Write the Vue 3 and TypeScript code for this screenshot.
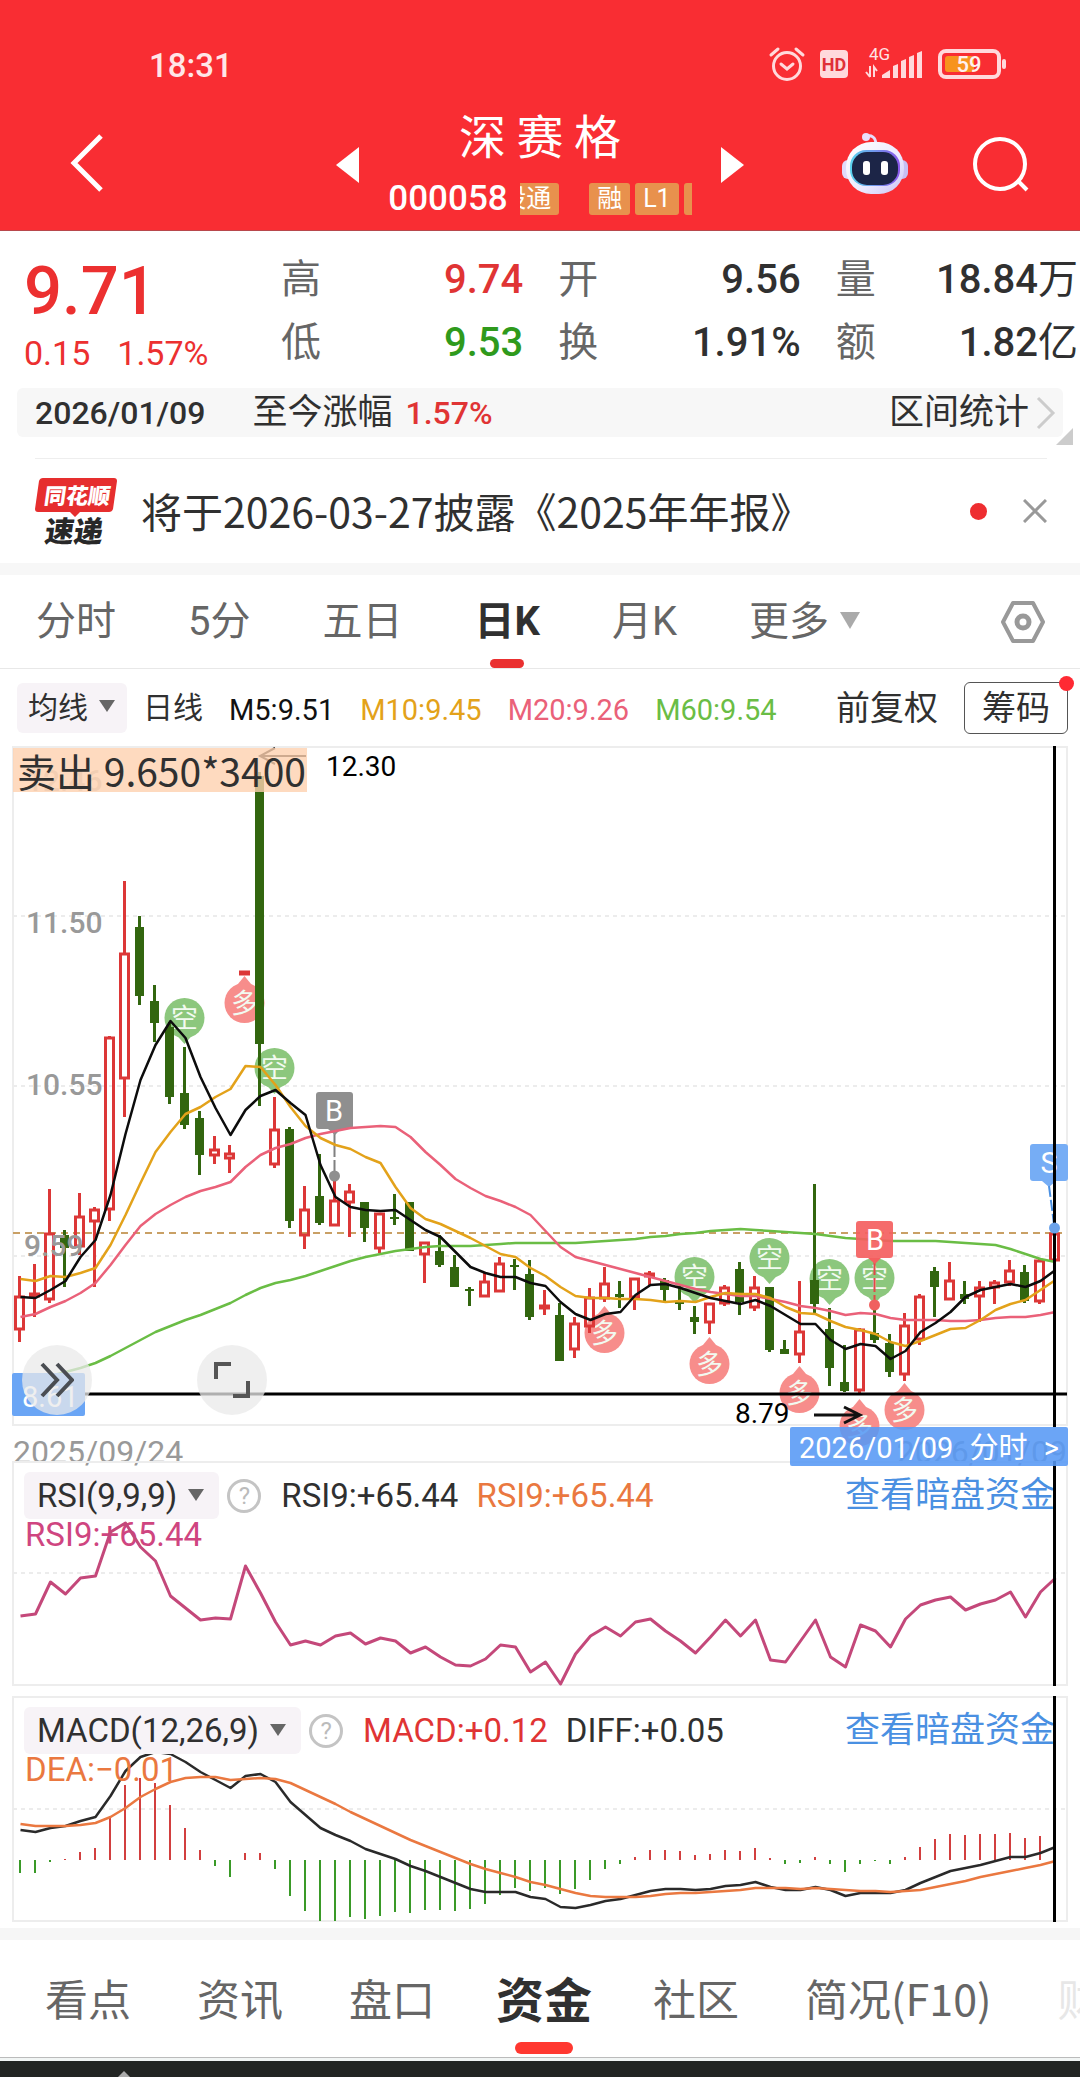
<script setup lang="ts">
type Candle = [high: number, top: number, bottom: number, low: number, up: 0 | 1]

const xOf = (i: number): number => 19.5 + i * 15

const candles: Candle[] = [
  [530, 550, 584, 596, 1], [518, 547, 551, 571, 1], [443, 487, 554, 557, 1], [484, 489, 502, 541, 0], [447, 470, 501, 509, 1],
  [461, 463, 476, 541, 1], [290, 291, 464, 475, 1], [135, 207, 333, 371, 1], [170, 181, 250, 259, 0], [239, 255, 277, 296, 0],
  [276, 281, 351, 358, 0], [301, 347, 379, 383, 0], [365, 372, 409, 429, 0], [390, 403, 410, 418, 1], [399, 407, 413, 427, 1],
  [225, 225, 229, 229, 1], [26, 30, 298, 360, 0], [351, 383, 419, 422, 1], [381, 383, 475, 482, 0], [440, 463, 490, 503, 1],
  [408, 450, 477, 479, 0], [431, 454, 480, 480, 1], [438, 445, 457, 491, 1], [456, 456, 482, 496, 0], [467, 467, 503, 507, 1],
  [448, 471, 473, 479, 0], [456, 456, 505, 505, 0], [496, 496, 509, 537, 1], [489, 505, 519, 521, 0], [509, 521, 541, 541, 0],
  [541, 543, 545, 560, 0], [527, 535, 551, 551, 1], [511, 517, 546, 546, 1], [513, 519, 521, 544, 0], [514, 528, 571, 574, 0],
  [544, 559, 563, 569, 1], [557, 569, 615, 615, 0], [571, 577, 604, 612, 1], [542, 551, 581, 587, 1], [521, 537, 553, 556, 1],
  [535, 548, 551, 562, 0], [532, 532, 552, 564, 1], [525, 527, 531, 539, 1], [532, 534, 544, 556, 0], [540, 556, 558, 564, 0],
  [560, 571, 576, 588, 0], [557, 557, 577, 588, 1], [539, 541, 558, 560, 1], [516, 523, 556, 569, 0], [530, 541, 562, 565, 1],
  [541, 541, 604, 606, 0], [594, 603, 608, 608, 0], [535, 585, 609, 617, 1], [438, 534, 558, 567, 0], [562, 583, 622, 640, 0],
  [599, 636, 645, 646, 0], [582, 583, 645, 649, 1], [560, 587, 594, 597, 0], [588, 597, 626, 631, 0], [567, 579, 629, 635, 1],
  [548, 550, 594, 599, 1], [521, 525, 541, 571, 0], [516, 534, 554, 554, 1], [535, 548, 553, 558, 0], [535, 541, 551, 576, 1],
  [534, 536, 542, 558, 1], [514, 524, 537, 540, 1], [519, 526, 555, 557, 0], [513, 514, 556, 558, 1], [486, 487, 515, 515, 1],
]

const averages: { color: string; values: number[] }[] = [
  { color: '#6abd45', values: [637, 633, 630, 626, 622, 617, 610, 602, 594, 586, 580, 574, 569, 563, 557, 549, 542, 537, 534, 530, 525, 520, 515, 511, 508, 505, 503, 501, 500, 500, 500, 499, 498, 497, 497, 497, 497, 497, 496, 495, 494, 493, 491, 490, 488, 487, 485, 484, 483, 484, 485, 486, 487, 488, 490, 492, 493, 494, 495, 495, 495, 495, 496, 497, 498, 499, 503, 508, 513, 516] },
  { color: '#ea6179', values: [571, 568, 561, 555, 547, 537, 519, 499, 480, 468, 459, 451, 445, 441, 436, 421, 409, 402, 398, 392, 388, 385, 382, 381, 380, 381, 391, 406, 419, 433, 442, 450, 455, 461, 469, 485, 501, 511, 515, 519, 523, 527, 531, 535, 539, 543, 546, 548, 550, 550, 553, 556, 560, 562, 565, 569, 567, 568, 572, 574, 574, 574, 575, 575, 574, 572, 571, 571, 569, 566] },
  { color: '#e3a21a', values: [533, 535, 530, 531, 527, 522, 499, 469, 437, 406, 386, 368, 361, 351, 343, 320, 321, 339, 361, 380, 392, 399, 403, 411, 417, 441, 462, 473, 478, 485, 492, 500, 508, 511, 522, 530, 541, 550, 552, 552, 553, 553, 554, 556, 555, 556, 551, 547, 548, 548, 552, 561, 567, 568, 575, 581, 584, 588, 596, 600, 595, 589, 583, 582, 574, 564, 558, 554, 544, 534] },
  { color: '#0c0c0c', values: [551, 552, 544, 535, 511, 494, 449, 388, 334, 299, 275, 292, 331, 362, 389, 364, 350, 344, 357, 369, 419, 451, 461, 464, 465, 464, 474, 484, 491, 506, 521, 527, 531, 531, 537, 540, 556, 568, 574, 568, 566, 549, 539, 538, 542, 547, 552, 555, 558, 554, 560, 569, 578, 578, 594, 603, 598, 600, 613, 605, 586, 577, 566, 551, 544, 541, 538, 541, 535, 524] },
]

const rsi = [155, 153, 121, 133, 117, 115, 71, 62, 86, 100, 135, 147, 159, 157, 158, 105, 132, 161, 184, 180, 184, 175, 172, 183, 177, 180, 192, 186, 196, 204, 205, 198, 184, 186, 211, 201, 223, 193, 175, 166, 175, 161, 158, 170, 180, 192, 176, 159, 175, 159, 199, 201, 180, 159, 196, 206, 164, 170, 186, 158, 144, 139, 136, 149, 143, 139, 131, 156, 131, 117]

const diff = [134, 136, 132, 130, 125, 121, 100, 75, 61, 56, 58, 66, 76, 84, 92, 80, 78, 86, 106, 119, 132, 139, 145, 153, 158, 163, 170, 175, 181, 187, 193, 196, 196, 196, 201, 203, 211, 212, 209, 205, 203, 199, 195, 193, 193, 194, 193, 190, 189, 186, 191, 194, 194, 191, 194, 200, 197, 197, 197, 194, 187, 181, 175, 172, 169, 165, 161, 161, 157, 151]

const dea = [128, 130, 130, 130, 129, 127, 121, 112, 101, 93, 86, 82, 81, 81, 84, 83, 82, 83, 87, 94, 101, 108, 116, 123, 130, 137, 144, 150, 156, 162, 168, 173, 177, 181, 186, 189, 193, 197, 200, 201, 201, 201, 200, 198, 197, 197, 196, 195, 194, 192, 192, 192, 193, 192, 193, 194, 195, 195, 196, 195, 194, 191, 188, 185, 181, 178, 175, 172, 169, 165]

// Positive bars hang below the zero line.
const histogram = [13, 13, 2, -1, -8, -12, -43, -75, -82, -77, -55, -32, -10, 6, 17, -7, -7, 9, 36, 51, 61, 61, 57, 59, 56, 52, 53, 50, 50, 51, 49, 44, 35, 28, 31, 28, 34, 29, 20, 9, 4, -3, -10, -10, -9, -5, -6, -10, -9, -12, -2, 4, 3, -3, 4, 12, 4, 1, 4, -3, -13, -21, -26, -25, -26, -26, -27, -22, -24, -29]

const shortSignals: [number, number][] = [[11, 272], [17, 322], [45, 531], [50, 512], [54, 533], [57, 532]]
const longSignals: [number, number][] = [[15, 257], [39, 587], [46, 618], [52, 647], [56, 680], [59, 664]]

const points = (values: number[]): string => values.map((y, i) => `${xOf(i) + 1},${y}`).join(' ')

const quotes = [
  { label: '高', value: '9.74', tone: 'up' },
  { label: '开', value: '9.56', tone: '' },
  { label: '量', value: '18.84', unit: '万', tone: '' },
  { label: '低', value: '9.53', tone: 'down' },
  { label: '换', value: '1.91%', tone: '' },
  { label: '额', value: '1.82', unit: '亿', tone: '' },
]
const periods = ['分时', '5分', '五日', '日K', '月K']
const sections = ['看点', '资讯', '盘口', '资金', '社区', '简况(F10)', '财务']
</script>

<template>
  <div class="app">
    <header class="top">
      <div class="status">
        <span class="clock">18:31</span>
        <svg class="status-icons" width="250" height="44" viewBox="762 43 250 44" aria-hidden="true">
          <g fill="none" stroke="#ffd9dc" stroke-width="3" stroke-linecap="round">
            <circle cx="787" cy="66" r="13.5" />
            <path d="M781 64l6 5 6-5M771 55l7-6M803 55l-7-6" />
          </g>
          <rect x="820" y="50" width="28" height="28" rx="4" fill="#ffd9dc" />
          <text x="834" y="71" text-anchor="middle" font-size="18" font-weight="700" fill="#e03038">HD</text>
          <text x="869" y="60" font-size="17" fill="#ffe3e5">4G</text>
          <g fill="#ffd9dc">
            <path d="M882 78v-3l8-5v8zM893 78V66l5-2v14zM901 78V61l5-2v19zM909 78V57l5-2v23zM917 78V53l5-2v27z" />
          </g>
          <path d="M870 66v11M870 77l-4-5M874 77V67l3 4" fill="none" stroke="#ffd9dc" stroke-width="2" />
          <rect x="940" y="51" width="59" height="26" rx="6" fill="none" stroke="#ffd9dc" stroke-width="4" />
          <rect x="1002" y="59" width="4" height="10" rx="2" fill="#ffd9dc" />
          <rect x="945" y="56" width="29" height="16" rx="3" fill="#f7931e" />
          <text x="969" y="72" text-anchor="middle" font-size="22" font-weight="500" fill="#fff0f0">59</text>
        </svg>
      </div>
      <div class="nav">
        <button class="icon-btn back" aria-label="返回">
          <svg width="34" height="60" viewBox="0 0 34 60"><path d="M31 3L4 30l27 27" fill="none" stroke="#fff" stroke-width="5" /></svg>
        </button>
        <div class="stock">
          <button class="icon-btn" aria-label="上一只">
            <svg width="23" height="36" viewBox="0 0 23 36"><path d="M23 0v36L0 18z" fill="#fff" /></svg>
          </button>
          <div class="stock-name">
            <h1>深 赛 格</h1>
            <div class="code">
              <span>000058</span>
              <div class="tags">
                <div class="tag-clip"><span class="tag">深股通</span></div>
                <span class="tag spaced">融</span>
                <span class="tag">L1</span>
                <span class="tag cut"></span>
              </div>
            </div>
          </div>
          <button class="icon-btn" aria-label="下一只">
            <svg width="23" height="36" viewBox="0 0 23 36"><path d="M0 0v36l23-18z" fill="#fff" /></svg>
          </button>
        </div>
        <div class="tools">
          <button class="icon-btn" aria-label="智能助手">
            <svg width="66" height="62" viewBox="0 0 66 62">
              <defs>
                <linearGradient id="shell" x1="0" y1="0" x2="1" y2="1">
                  <stop offset="0" stop-color="#ffffff" />
                  <stop offset="0.6" stop-color="#ece9ff" />
                  <stop offset="1" stop-color="#c9c3f5" />
                </linearGradient>
                <linearGradient id="rim" x1="0" y1="0" x2="1" y2="0">
                  <stop offset="0" stop-color="#59d3ee" />
                  <stop offset="1" stop-color="#8a56ea" />
                </linearGradient>
              </defs>
              <path d="M23 5c6-3 11 0 11 8" fill="none" stroke="#e6dcfb" stroke-width="3" />
              <circle cx="24" cy="5" r="4" fill="#eadffc" />
              <rect x="0" y="28" width="12" height="19" rx="6" fill="#e0dafc" />
              <rect x="54" y="28" width="12" height="19" rx="6" fill="#c7bff3" />
              <rect x="4" y="10" width="58" height="52" rx="25" fill="url(#shell)" />
              <rect x="8" y="18" width="50" height="36" rx="16" fill="url(#rim)" />
              <rect x="10" y="20" width="46" height="33" rx="15" fill="#1c2547" />
              <rect x="21" y="29" width="7" height="14" rx="3" fill="#fff" />
              <rect x="39" y="29" width="7" height="14" rx="3" fill="#fff" />
            </svg>
          </button>
          <button class="icon-btn" aria-label="搜索">
            <svg width="56" height="56" viewBox="0 0 56 56"><circle cx="27" cy="27" r="25" fill="none" stroke="#fff" stroke-width="4" /><path d="M44 43l10 10" stroke="#fff" stroke-width="4" /></svg>
          </button>
        </div>
      </div>
    </header>

    <section class="quote">
      <div class="price">
        <strong>9.71</strong>
        <div class="change"><span>0.15</span><span>1.57%</span></div>
      </div>
      <dl class="figures">
        <div v-for="q in quotes" :key="q.label" class="figure">
          <dt>{{ q.label }}</dt>
          <dd :class="q.tone">{{ q.value }}<span v-if="q.unit">{{ q.unit }}</span></dd>
        </div>
      </dl>
    </section>

    <div class="range">
      <span class="num">2026/01/09</span>
      <span class="since">至今涨幅</span>
      <span class="num up">1.57%</span>
      <a href="#" class="stat">区间统计
        <svg width="20" height="34" viewBox="0 0 20 34"><path d="M2 2l15 15L2 32" fill="none" stroke="#ccc" stroke-width="3" /></svg>
      </a>
      <i class="corner"></i>
    </div>

    <div class="notice">
      <svg class="logo" width="82" height="68" viewBox="0 0 82 68" role="img" aria-label="同花顺速递">
        <path d="M8 1h71q3 0 3 3l-4 28q-1 3-4 3H45l-5 5-5-5H3q-3 0-3-3L4 4q1-3 4-3z" fill="#e62e2e" />
        <g transform="skewX(-8)" font-weight="900">
          <text x="12" y="27" font-size="22" fill="#fff">同花顺</text>
          <text x="18" y="65" font-size="29" fill="#282828">速递</text>
        </g>
      </svg>
      <a href="#" class="notice-text">将于2026-03-27披露《2025年年报》</a>
      <i class="dot"></i>
      <button class="icon-btn" aria-label="关闭">
        <svg width="24" height="24" viewBox="0 0 24 24"><path d="M1 1l22 22M23 1L1 23" stroke="#999" stroke-width="3" /></svg>
      </button>
    </div>

    <nav class="periods">
      <button v-for="p in periods" :key="p" :class="{ active: p === '日K' }">{{ p }}</button>
      <button class="more">更多<i class="caret light"></i></button>
      <button class="icon-btn gear" aria-label="设置">
        <svg width="44" height="44" viewBox="0 0 44 44" fill="none" stroke="#999" stroke-width="4"><path d="M12 3h20l10 19-10 19H12L2 22z" stroke-linejoin="round" /><circle cx="22" cy="22" r="6" stroke-width="5" /></svg>
      </button>
    </nav>

    <div class="ma-row">
      <button class="pill">均线<i class="caret"></i></button>
      <span class="daily">日线</span>
      <div class="ma-values">
        <span class="m5">M5:9.51</span><span class="m10">M10:9.45</span><span class="m20">M20:9.26</span><span class="m60">M60:9.54</span>
      </div>
      <span class="adjust">前复权</span>
      <button class="chips">筹码<i class="dot"></i></button>
    </div>

    <section class="panel main-chart">
      <svg viewBox="0 0 1080 681" class="plot">
        <rect x="13" y="1" width="1054" height="678" class="frame" />
        <path d="M13 170H1067M13 340H1067M13 510H1067" class="grid" />
        <path d="M13 487H1062" stroke="#c9a065" stroke-width="2" stroke-dasharray="7 5" />
        <g v-for="[i, y] in shortSignals" :key="'s' + i">
          <path :d="`M${xOf(i) - 9} ${y + 16}l9 10 9-10z`" fill="#8cc77d" />
          <circle :cx="xOf(i)" :cy="y" r="20" fill="#8cc77d" />
          <text :x="xOf(i)" :y="y + 10" class="signal">空</text>
        </g>
        <g v-for="[i, y] in longSignals" :key="'l' + i">
          <path :d="`M${xOf(i) - 9} ${y - 16}l9 -11 9 11z`" fill="#f78d8b" />
          <circle :cx="xOf(i)" :cy="y" r="20" fill="#f78d8b" />
          <text :x="xOf(i)" :y="y + 10" class="signal">多</text>
        </g>
        <template v-for="(c, i) in candles" :key="i">
          <g v-if="c[4]" stroke="#dc3737" stroke-width="3" fill="none">
            <path :d="`M${xOf(i)} ${c[0]}V${c[1]}M${xOf(i)} ${c[2]}V${c[3]}`" />
            <rect :x="xOf(i) - 4" :y="c[1] + 1" width="8" :height="Math.max(c[2] - c[1] - 2, 1)" />
          </g>
          <g v-else fill="#32660f">
            <rect :x="xOf(i) - 1.5" :y="c[0]" width="3" :height="c[3] - c[0]" />
            <rect :x="xOf(i) - 4.5" :y="c[1]" width="9" :height="c[2] - c[1]" />
          </g>
        </template>
        <g class="axis">
          <text x="26" y="45" opacity="0.6">12.46</text>
          <text x="26" y="187">11.50</text>
          <text x="26" y="349">10.55</text>
          <text x="24" y="510">9.59</text>
        </g>
        <g stroke-width="2">
          <path d="M334.5 386V428" stroke="#808080" stroke-dasharray="25 3" />
          <rect x="316" y="346" width="37" height="37" rx="3" fill="#8f8f8f" />
          <path d="M328 383h13l-6 6z" fill="#8f8f8f" />
          <circle cx="334.5" cy="430" r="5.5" fill="#8f8f8f" />
          <path d="M874.5 515V557" stroke="#e04848" stroke-dasharray="14 3" />
          <circle cx="874.5" cy="559" r="5.5" fill="#f0605f" />
        </g>
        <polyline v-for="a in averages" :key="a.color" :points="points(a.values)" :stroke="a.color" class="curve" />
        <g>
          <rect x="856" y="475" width="37" height="37" rx="3" fill="#f45f5f" fill-opacity="0.92" />
          <path d="M868 512h13l-6 6z" fill="#f45f5f" />
          <rect x="1030" y="398" width="38" height="37" rx="3" fill="#76adf5" />
          <path d="M1042 435h14l-7 6z" fill="#76adf5" />
          <path d="M1049 440l5 38" stroke="#4a90e2" stroke-width="2" stroke-dasharray="11 3" />
          <text x="334" y="375" class="badge">B</text>
          <text x="875" y="504" class="badge">B</text>
          <text x="1049" y="427" class="badge">S</text>
        </g>
        <g stroke="#111" stroke-width="2" fill="none">
          <path d="M306 10H260M275 2l-15 8 15 8" />
          <path d="M814 669H860M844 661l16 8-16 8" stroke-width="3" />
        </g>
        <text x="326" y="30" class="extreme">12.30</text>
        <text x="735" y="677" class="extreme">8.79</text>
        <path d="M13 648H1067M1054.5 0V681" stroke="#000" stroke-width="3" />
        <circle cx="1054.5" cy="482" r="5.5" fill="#6ba2ea" />
        <rect x="12" y="627" width="73" height="43" rx="2" fill="#6aa5f5" />
        <text x="22" y="661" class="low">8.61</text>
      </svg>
      <div class="trade">卖出 9.650*3400</div>
      <button class="round forward" aria-label="展开">
        <svg width="34" height="36" viewBox="0 0 34 36"><path d="M2 2l15 16L2 34M17 2l15 16-15 16" fill="none" stroke="#4a4d52" stroke-width="4" /></svg>
      </button>
      <button class="round expand" aria-label="全屏">
        <svg width="36" height="36" viewBox="0 0 36 36"><path d="M2 17V2h15M34 19v15H19" fill="none" stroke="#555" stroke-width="4" /></svg>
      </button>
    </section>

    <div class="dates">
      <span>2025/09/24</span>
      <span class="last-date">2026/01/09</span>
      <button class="cursor-date"><span>2026/01/09</span><span>分时</span><span>&gt;</span></button>
    </div>

    <section class="panel rsi">
      <svg viewBox="0 0 1080 225" class="plot">
        <rect x="13" y="1" width="1054" height="223" class="frame" />
        <path d="M13 112H1067" class="grid" />
      </svg>
      <div class="legend">
        <button class="pill">RSI(9,9,9)<i class="caret"></i></button>
        <button class="help" aria-label="说明">?</button>
        <span>RSI9:+65.44</span>
        <span class="orange">RSI9:+65.44</span>
        <a href="#">查看暗盘资金</a>
      </div>
      <div class="second magenta">RSI9:+65.44</div>
      <svg viewBox="0 0 1080 225" class="plot">
        <polyline :points="points(rsi)" stroke="#c4487a" class="curve thick" />
        <path d="M1054.5 0V225" stroke="#000" stroke-width="3" />
      </svg>
    </section>

    <section class="panel macd">
      <svg viewBox="0 0 1080 226" class="plot">
        <rect x="13" y="1" width="1054" height="224" class="frame" />
        <path d="M13 113H1067" class="grid" />
        <rect v-for="(h, i) in histogram" :key="i" :x="xOf(i) - 0.5" :y="h < 0 ? 164 + h : 164" width="2" :height="Math.abs(h)" :fill="h < 0 ? '#d23f3f' : '#3a9a28'" />
        <polyline :points="points(diff)" stroke="#2a2a2a" class="curve" />
      </svg>
      <div class="legend">
        <button class="pill">MACD(12,26,9)<i class="caret"></i></button>
        <button class="help" aria-label="说明">?</button>
        <span class="up">MACD:+0.12</span>
        <span>DIFF:+0.05</span>
        <a href="#">查看暗盘资金</a>
      </div>
      <div class="second orange">DEA:−0.01</div>
      <svg viewBox="0 0 1080 226" class="plot">
        <polyline :points="points(dea)" stroke="#ea7840" class="curve" />
        <path d="M1054.5 0V226" stroke="#000" stroke-width="3" />
      </svg>
    </section>

    <nav class="sections">
      <button v-for="s in sections" :key="s" :class="{ active: s === '资金', faded: s === '财务' }">{{ s }}</button>
    </nav>
    <footer class="dock">
      <svg width="12" height="6" viewBox="0 0 12 6"><path d="M6 0l6 6H0z" fill="#aaa" /></svg>
    </footer>
  </div>
</template>

<style>
body {
  margin: 0;
  background: #fff;
}
</style>

<style scoped>
.app {
  font-family: Roboto, "Noto Sans CJK SC", sans-serif;
  color: #303030;
  overflow: hidden;
  background: #fff;
}
* {
  box-sizing: border-box;
}
button {
  font: inherit;
  color: inherit;
  border: 0;
  padding: 0;
  background: none;
  white-space: nowrap;
}
a {
  color: inherit;
  text-decoration: none;
}
svg {
  display: block;
}
.up { color: #e03434; }
.down { color: #2f9a1c; }
.orange { color: #ea7840; }
.magenta { color: #cf4580; }

.top {
  background: #f92d33;
  color: #fff;
  height: 231px;
  border-bottom: 1px solid #b8484c;
}
.status {
  display: flex;
  justify-content: space-between;
  align-items: center;
  height: 100px;
  padding: 30px 68px 0 149px;
}
.clock {
  font-size: 33px;
  font-weight: 500;
  color: #ffe6e8;
}
.nav {
  display: grid;
  grid-template-columns: 1fr auto 1fr;
  height: 130px;
}
.icon-btn {
  display: flex;
}
.back {
  margin: 33px 0 0 70px;
  align-self: start;
}
.stock {
  display: flex;
  justify-content: space-between;
  width: 408px;
}
.stock > .icon-btn {
  margin-top: 47px;
  align-self: start;
}
.stock-name {
  display: flex;
  flex-direction: column;
  align-items: center;
}
h1 {
  margin: 4px 0 0;
  font-family: "Noto Sans CJK SC", sans-serif;
  font-size: 47px;
  font-weight: 400;
  line-height: 60px;
}
.code {
  display: flex;
  align-items: center;
  gap: 12px;
  margin-top: 18px;
  font-size: 35px;
  font-weight: 500;
  line-height: 34px;
}
.tags {
  display: flex;
  gap: 5px;
  width: 172px;
}
.tag-clip {
  display: flex;
  justify-content: flex-end;
  width: 42px;
  overflow: hidden;
}
.tag {
  flex: none;
  height: 32px;
  padding: 0 8px;
  border-radius: 3px;
  background: #e8914d;
  font-size: 25px;
  font-weight: 400;
  line-height: 32px;
}
.spaced {
  margin-left: 25px;
}
.cut {
  width: 8px;
  padding: 0;
  border-radius: 3px 0 0 3px;
}
.tools {
  display: flex;
  justify-content: flex-end;
  align-items: flex-start;
  gap: 65px;
  padding: 32px 51px 0 0;
}
.tools .icon-btn:last-child {
  margin-top: 5px;
}

.quote {
  display: flex;
  height: 157px;
  padding: 17px 2px 0 24px;
}
.price {
  flex: none;
  width: 257px;
  color: #ec3030;
}
.price strong {
  display: block;
  margin-top: 7px;
  font-size: 67px;
  font-weight: 500;
  line-height: 72px;
}
.change {
  display: flex;
  gap: 27px;
  margin-top: 6px;
  font-size: 34px;
  line-height: 40px;
}
.figures {
  flex: 1;
  display: grid;
  grid-template-columns: repeat(3, 1fr);
  grid-auto-rows: 63px;
  column-gap: 35px;
  margin: 0;
}
.figure {
  display: flex;
  justify-content: space-between;
  align-items: center;
  font-size: 40px;
  line-height: 48px;
}
dt {
  color: #666;
}
dd {
  margin: 0;
  font-weight: 500;
  white-space: nowrap;
}
dd span {
  font-weight: 400;
}

.range {
  position: relative;
  display: flex;
  align-items: center;
  height: 49px;
  margin: 0 17px;
  padding: 0 7px 0 18px;
  border-radius: 6px;
  background: #f7f7f7;
  font-size: 35px;
  line-height: 48px;
}
.range .num {
  font-size: 32px;
  font-weight: 500;
}
.since {
  margin: 0 13px 0 47px;
}
.stat {
  display: flex;
  align-items: center;
  gap: 7px;
  margin-left: auto;
}
.corner {
  position: absolute;
  right: -10px;
  bottom: -8px;
  border-bottom: 17px solid #ccc;
  border-left: 17px solid transparent;
}

.notice {
  display: flex;
  align-items: center;
  height: 105px;
  margin: 21px 33px 0 35px;
  border-top: 1px solid #eee;
}
.logo text {
  font-family: "Noto Sans CJK SC", sans-serif;
}
.notice-text {
  margin-left: 24px;
  padding-bottom: 3px;
  font-family: "Noto Sans CJK SC", sans-serif;
  font-size: 41px;
}
.dot {
  border-radius: 50%;
  background: #ee2d30;
}
.notice .dot {
  width: 17px;
  height: 17px;
  margin: 0 36px 0 auto;
}

.periods {
  display: flex;
  align-items: center;
  gap: 72px;
  height: 106px;
  padding: 0 35px 0 36px;
  border-top: 12px solid #f7f7f7;
  border-bottom: 1px solid #e8e8e8;
  color: #666;
  font-size: 40px;
  line-height: 48px;
}
.periods button {
  position: relative;
}
.active {
  color: #303030;
  font-weight: 700;
}
.active::after {
  content: "";
  position: absolute;
  left: 50%;
  border-radius: 6px;
}
.periods .active::after {
  width: 34px;
  height: 9px;
  bottom: -22px;
  margin-left: -17px;
  background: #ea3030;
}
.caret {
  display: inline-block;
  margin-left: 11px;
  border: 8px solid transparent;
  border-top: 12px solid #666;
  border-bottom: 0;
  vertical-align: 6px;
}
.light {
  border-width: 17px 10px 0;
  border-top-color: #aaa;
}
.gear {
  margin-left: auto;
}

.ma-row {
  display: flex;
  align-items: center;
  height: 77px;
  padding: 0 12px 0 17px;
  font-size: 30px;
  line-height: 40px;
}
.pill {
  height: 50px;
  padding: 0 12px 0 11px;
  border-radius: 6px;
  background: #f7f3f7;
}
.daily {
  margin-left: 16px;
}
.ma-values {
  display: flex;
  gap: 26px;
  margin-left: 26px;
  padding-top: 4px;
  font-size: 29px;
}
.m5 { color: #111; }
.m10 { color: #e3a21a; }
.m20 { color: #ea6179; }
.m60 { color: #6abd45; }
.adjust {
  margin-left: auto;
  font-size: 34px;
}
.chips {
  position: relative;
  width: 104px;
  height: 52px;
  margin-left: 26px;
  border: 1px solid #555;
  border-radius: 6px;
  font-size: 34px;
}
.chips .dot {
  position: absolute;
  top: -7px;
  right: -7px;
  width: 15px;
  height: 15px;
  background: #ff2a33;
}

.panel {
  position: relative;
}
.plot {
  width: 100%;
  overflow: visible;
}
.frame {
  fill: none;
  stroke: #ededed;
  stroke-width: 2;
}
.grid {
  stroke: #ececec;
  stroke-width: 2;
  stroke-dasharray: 4 4;
}
.curve {
  fill: none;
  stroke-width: 2.5;
  stroke-linejoin: round;
}
.thick {
  stroke-width: 3;
}
.signal {
  font-size: 27px;
  fill: #f2faf0;
  text-anchor: middle;
}
.axis {
  font-size: 30px;
  font-weight: 500;
  fill: #999;
}
.badge {
  font-size: 29px;
  fill: #fff;
  text-anchor: middle;
}
.extreme {
  font-size: 28px;
  fill: #000;
}
.low {
  font-size: 29px;
  fill: #fff;
}
.trade {
  position: absolute;
  top: 2px;
  left: 13px;
  width: 294px;
  padding-left: 4px;
  background: rgba(254, 209, 175, 0.8);
  font-family: "Noto Sans CJK SC", sans-serif;
  font-size: 39px;
  line-height: 44px;
  white-space: nowrap;
}
.round {
  position: absolute;
  bottom: 12px;
  display: flex;
  align-items: center;
  justify-content: center;
  width: 70px;
  height: 70px;
  border-radius: 50%;
  background: rgba(234, 234, 234, 0.75);
}
.forward { left: 22px; }
.expand { left: 197px; }

.dates {
  position: relative;
  display: flex;
  justify-content: space-between;
  height: 34px;
  padding: 0 12px 0 13px;
  color: #999;
  font-size: 32px;
  line-height: 50px;
}
.last-date {
  position: absolute;
  right: 13px;
}
.cursor-date {
  position: relative;
  z-index: 1;
  display: flex;
  align-items: center;
  justify-content: space-between;
  width: 278px;
  height: 39px;
  padding: 3px 9px 0;
  border-radius: 2px;
  background: rgba(86, 153, 245, 0.88);
  color: #fff;
  font-size: 29px;
  line-height: 36px;
}

.rsi .plot,
.macd .plot {
  position: relative;
}
.rsi .plot + .legend,
.macd .plot + .legend {
  position: absolute;
}
.legend {
  top: 11px;
  left: 24px;
  right: 25px;
  display: flex;
  align-items: center;
  height: 47px;
  font-size: 33px;
  line-height: 44px;
}
.legend .pill {
  height: 47px;
  padding: 0 15px 0 13px;
}
.help {
  width: 34px;
  height: 34px;
  margin: 0 20px 0 8px;
  border: 3px solid #c4c4c4;
  border-radius: 50%;
  color: #bbb;
  font-size: 24px;
  line-height: 28px;
}
.legend span + span {
  margin-left: 18px;
}
.legend a {
  margin-left: auto;
  color: #4a90e2;
  font-size: 35px;
}
.second {
  position: absolute;
  top: 54px;
  left: 25px;
  font-size: 33px;
  line-height: 40px;
}
.panel .second + .plot {
  position: absolute;
  top: 0;
  left: 0;
  pointer-events: none;
}
.macd {
  margin-top: 10px;
}

.sections {
  display: flex;
  align-items: center;
  gap: 66px;
  height: 130px;
  margin-top: 6px;
  padding: 0 0 4px 45px;
  border-top: 12px solid #f6f6f6;
  border-bottom: 1px solid #bbb;
  color: #666;
  font-family: "Noto Sans CJK SC", sans-serif;
  font-size: 43px;
}
.sections button {
  position: relative;
}
.sections .active {
  margin: 0 -5px;
  font-size: 48px;
}
.sections .active::after {
  width: 58px;
  height: 12px;
  bottom: -22px;
  margin-left: -29px;
  background: #ff3830;
}
.faded {
  opacity: 0.15;
}
.dock {
  display: flex;
  align-items: flex-end;
  height: 19px;
  padding-left: 118px;
  border-top: 3px solid #f1f5f4;
  background: #222523;
}
</style>
